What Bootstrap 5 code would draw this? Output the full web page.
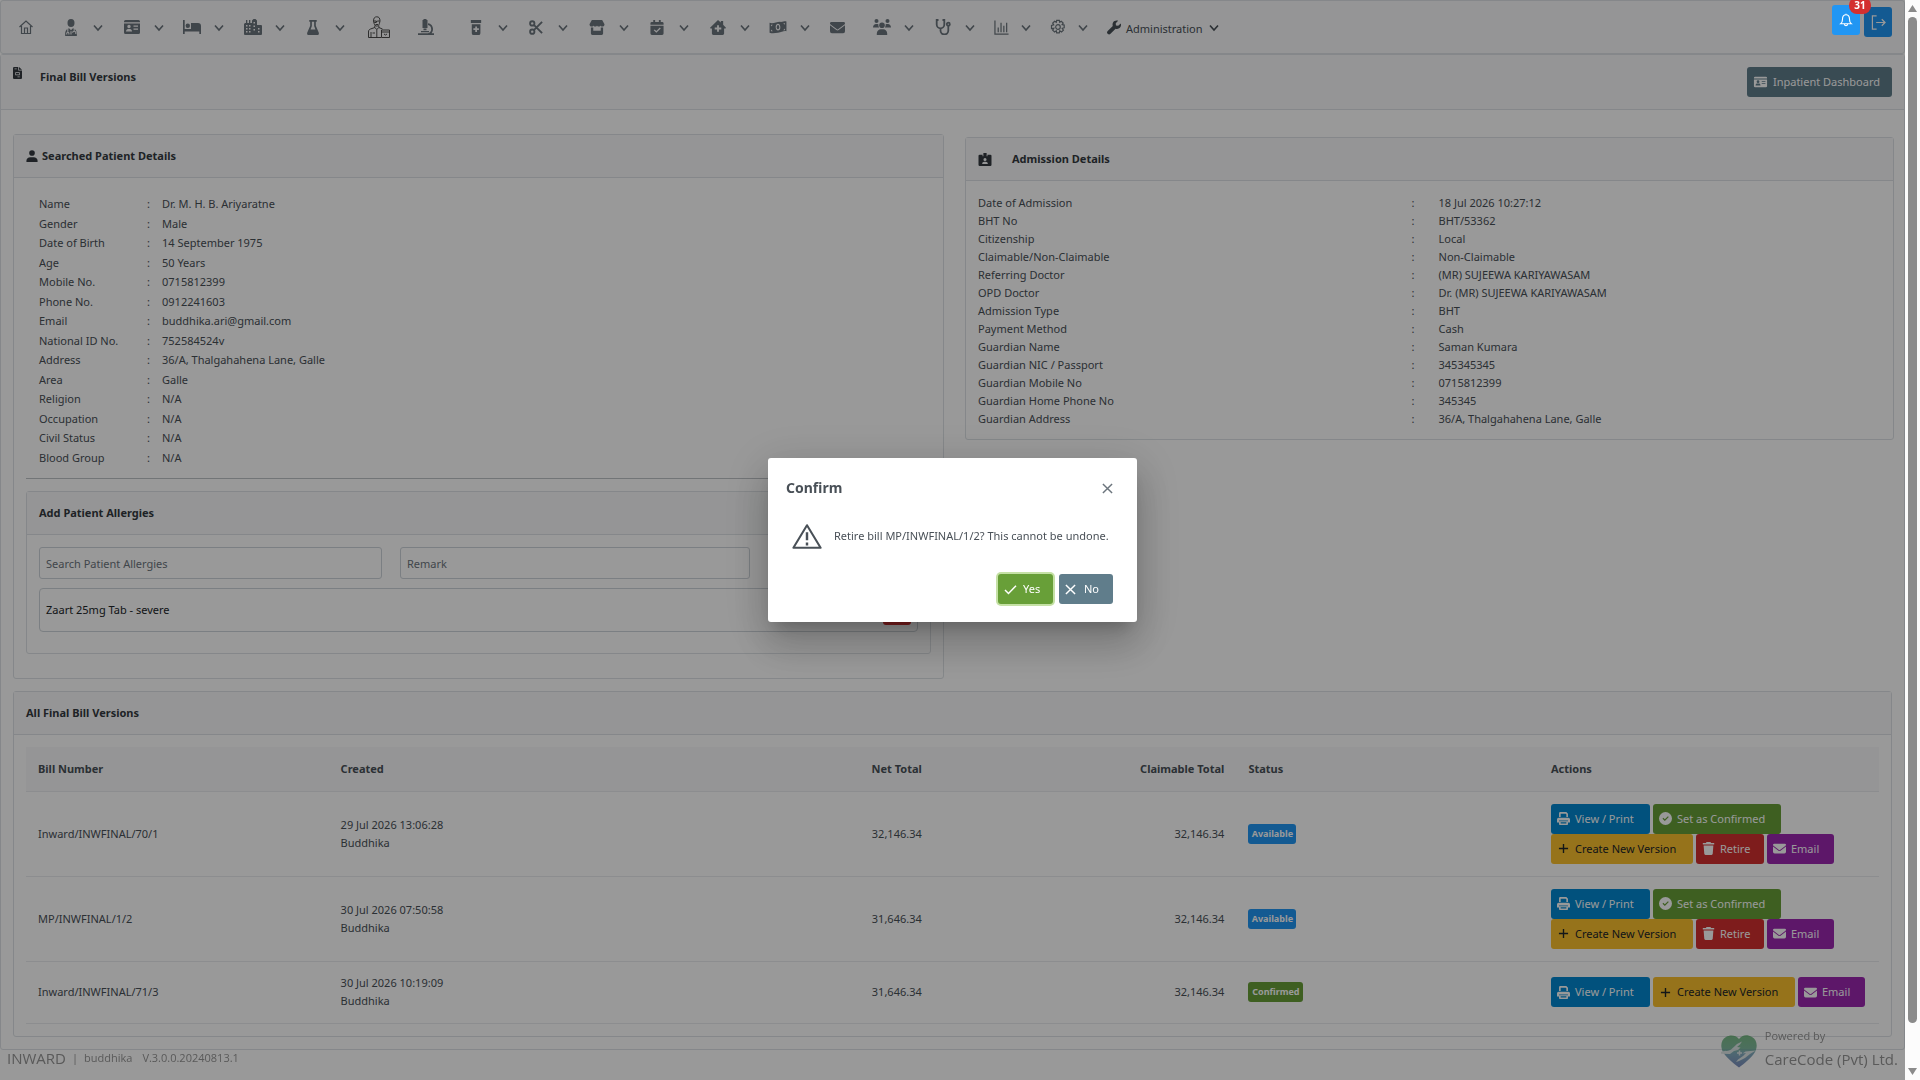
<!DOCTYPE html>
<html lang="en">
<head>
<meta charset="utf-8">
<meta name="viewport" content="width=device-width, initial-scale=1">
<title>Final Bill Versions</title>
<link href="https://cdn.jsdelivr.net/npm/bootstrap@5.3.0/dist/css/bootstrap.min.css" rel="stylesheet">
<style>
:root{--line:#dee2e6;--ink:#495057;--head:#f8f9fa}
body{font-family:"Noto Sans","Open Sans",sans-serif;font-size:11px;line-height:18px;color:var(--ink);background:#fff}
svg{display:block;flex:none}
.btn,.form-control{font-size:11px;line-height:18px;border-radius:3px}
.page{min-width:0;min-height:100vh;margin-right:15px;padding-bottom:31px}
.menubar{height:54px;border:1px solid var(--line);border-radius:3px;padding:0 12px 0 8px;color:#6c757d}
.menubar .item{display:flex;align-items:center;padding:0 9px;gap:12px;color:#6c757d;text-decoration:none;height:52px}
.menubar .item:nth-child(even){padding-right:10px}
.menubar .item.tight{gap:11px;padding-right:9px}
.menubar .leaf{padding-right:19px}
.menubar .item.leaf-s{padding-right:15px}
.menubar .item.leaf-l{padding-right:23px}
.menubar .item.admin{gap:5px;color:var(--ink)}
.pg-panel{border:1px solid var(--line);border-radius:3px}
.pg-head{height:55px;background:var(--head);border-bottom:1px solid var(--line);padding:12px 12px 0 12px;color:#343a40}
.pg-head h1{font-size:11px;font-weight:700;line-height:20px;margin:0 0 0 18px}
.btn-slate{background:#607d8b;color:#fff}
.btn-sq{width:28px;height:30px;padding:0}
.btn-blue{background:#2196f3;color:#fff}
.btn-red{background:#d32f2f;color:#fff}
.btn-p{height:30px;padding:0 12px 0 6px;display:inline-flex;align-items:center;gap:5px;border:0;white-space:nowrap}
.notify{position:relative;z-index:1060}
.btn-out{margin-top:2px}
.notify .count{position:absolute;top:-8px;left:17px;min-width:22px;height:17px;border-radius:8px;background:#d32f2f;color:#fff;font-weight:700;font-size:10px;line-height:17px;text-align:center}
.main-body{padding:0 12px 12px}
.panel{border:1px solid var(--line);border-radius:3px}
.panel>header{height:43px;background:var(--head);border-bottom:1px solid var(--line);padding:0 12px;display:flex;align-items:center;font-weight:700;color:#343a40}
.panel>header h2{font-size:11px;font-weight:700;line-height:18px;margin:0}
.two-up{gap:21px}
.left-col{flex:0 1 931px}
.left-body{padding:8px 12px}
.right-col{flex:1 1 0;padding-top:3px;margin-right:-2px}
.adm-body{padding:13px 12px 11px}
.facts th{font-weight:400}
.facts td,.facts th{padding:0}
.pt{margin:8px 13px 0}
.pt tr:nth-child(odd){height:20px}
.pt tr:nth-child(even){height:19px}
.pt th{width:108px}.pt .sep{width:15px}
.adm{width:100%}
.adm th{width:48%}.adm .sep{width:3%}
.rule{height:1px;background:#bfc3c7;margin:11px 0 12px}
.allergy-body{padding:12px 12px 20px}
.allergy-form{gap:18px;margin-bottom:9px}
.form-control{height:32px;padding:0 6px;border:1px solid #ced4da}
.form-control::placeholder{color:#6c757d}
.f1{flex:0 1 343px}.f2{flex:0 1 350px}
.allergy{border:1px solid #ced4da;border-radius:4px;height:44px;margin-bottom:1px;color:#212529;padding:0 6px}
.versions{margin-top:12px}
.versions-body{padding:12px}
.bills{width:100%;table-layout:fixed}
.bills th{background:var(--head);height:44px;font-weight:700}
.bills td,.bills th{padding:0 12px;border-bottom:1px solid #e9ecef}
.bills col.c{width:16.33%}
.bills td{height:85px}
.bills tr.short td{height:62px}
.acts{display:flex;flex-wrap:wrap;gap:0 3px;margin-right:-10px}
.b-view{background:#0288d1;color:#fff;min-width:99px}
.b-ok{background:#689f38;color:#fff;min-width:128px}
.b-new{background:#fbc02d;color:#212529;min-width:142px}
.b-del{background:#d32f2f;color:#fff;min-width:68px}
.b-mail{background:#9c27b0;color:#fff;min-width:67px}
.tagx{display:inline-block;height:20px;line-height:20px;border-radius:3px;font-size:9px;font-weight:700;color:#fff;padding:0 2px;vertical-align:middle;text-align:center}
.t-a{background:#2196f3;min-width:48px}.t-c{background:#689f38;min-width:55px}
.mask{position:fixed;inset:0 15px 0 0;background:rgba(0,0,0,.4);z-index:1050;display:flex;align-items:center;justify-content:center}
.dialog{width:369px;background:#fff;border-radius:3px;box-shadow:0 11px 15px -7px rgba(0,0,0,.2),0 24px 38px 3px rgba(0,0,0,.14),0 9px 46px 8px rgba(0,0,0,.12)}
.dialog .top{padding:18px 18px 0;height:58px}
.dialog .top h2{font-size:14px;font-weight:700;line-height:24px;margin:0}
.dialog .mid{padding:0 0 0 24px;gap:12px;height:40px;white-space:nowrap}
.dialog .bot{padding:18px 24px;gap:6px}
.b-yes{background:#689f38;color:#fff;width:55px;gap:6px;box-shadow:0 0 0 2px #c5e1a5}
.b-no{width:54px;gap:8px}
.xbtn{background:none;border:0;padding:0;width:24px;height:24px}
.foot{position:fixed;left:0;right:15px;bottom:0;height:54px;padding:0 7px;color:#969696;font-weight:500;font-family:"Open Sans","Noto Sans",sans-serif}
.foot .big{font-size:15px;line-height:26px}
.foot-user{height:26px;margin-top:19px;gap:6px}
.foot-logo{margin-top:9px;opacity:.75}
.foot-by{line-height:20px}
.sbar{position:fixed;top:0;right:0;bottom:0;width:15px;background:#fcfcfc;z-index:1070;padding:5px 0;align-items:center}
.sbar i{width:9px;flex:0 1 1006px;background:#8b8b8b;border-radius:5px;margin-top:5px}
</style>
<script src="https://cdn.jsdelivr.net/npm/bootstrap@5.3.0/dist/js/bootstrap.bundle.min.js"></script>
</head>
<body>
<svg width="0" height="0" class="position-absolute" aria-hidden="true">
<defs>
<symbol id="chev" viewBox="0 0 12 12"><path d="M2 4.500 6 9l4-4.500" fill="none" stroke="currentColor" stroke-width="1.600"/></symbol>
<symbol id="home" viewBox="0 0 16 16"><path d="M1.500 8 8 2l6.500 6M3.500 7v7.500h9V7M6.500 14.500V9h3v5.500" fill="none" stroke="currentColor" stroke-width="1.200"/></symbol>
<symbol id="doctor" viewBox="0 0 16 16"><ellipse cx="8" cy="3.800" rx="3.300" ry="3.700" fill="currentColor"/><path fill="currentColor" d="M2.500 16v-2c0-3 1.700-5 4-5L8 10.500 9.500 9c2.300 0 4 2 4 5v2z"/><path d="M5 9.500V12M11 9.500V11M4 14.500v-1a1 1 0 0 1 2 0v1M9.500 13a1.500 1.500 0 1 1 3 0v1M8 11.500v3" stroke="#f8f9fa" fill="none"/></symbol>
<symbol id="idcard" viewBox="0 0 16 16"><path fill="currentColor" fill-rule="evenodd" d="M1.500 1h13A1.500 1.500 0 0 1 16 2.500V3.300H0v-.8A1.500 1.500 0 0 1 1.500 1M0 4.500h16v9a1.500 1.500 0 0 1-1.500 1.500h-13A1.500 1.500 0 0 1 0 13.500zm5 1.300a1.700 1.700 0 1 0 0 3.400 1.700 1.700 0 0 0 0-3.400M2 12.500h6c0-1.600-1-2.500-2-2.500H4c-1 0-2 .9-2 2.500M9.500 6.500v1.300H14V6.500zm0 3v1.300H14V9.500z"/></symbol>
<symbol id="bed" viewBox="0 0 18 16"><path fill="currentColor" d="M0 1h1.700v9H8V4h7a3 3 0 0 1 3 3v8h-1.700v-2.500H1.700V15H0z"/><circle cx="4.800" cy="6.800" r="2.200" fill="currentColor"/></symbol>
<symbol id="city" viewBox="0 0 18 16"><path fill="currentColor" fill-rule="evenodd" d="M1 4h1V1h1.300v3H5V1h1.300v3H8V1.500L9.500 0h2L13 1.500V6h4a1 1 0 0 1 1 1v8a1 1 0 0 1-1 1H1a1 1 0 0 1-1-1V5zM2 6v1.500h1.500V6zm3 0v1.500h1.500V6zM2 9v1.500h1.500V9zm3 0v1.500h1.500V9zm-3 3v1.500h1.500V12zm3 0v1.500h1.500V12zm4.500-9v1.500H11V3zm0 3.500V8H11V6.500zm0 3.500v1.500H11V10zm4.500-1v1.500h1.500V9zm0 3v1.500h1.500V12z"/></symbol>
<symbol id="flask" viewBox="0 0 16 16"><path fill="currentColor" fill-rule="evenodd" d="M4 0h8v1.800h-1V6l3.100 7.200C14.700 14.600 14 16 12.700 16H3.300c-1.300 0-2-1.400-1.400-2.800L5 6V1.800H4zM6.800 1.800v4.600L5.400 10h5.200L9.200 6.400V1.800z"/></symbol>
<symbol id="lab" viewBox="0 0 22 22"><g fill="none" stroke="#3a3a3a" stroke-width=".9"><path d="M5.500 5C5.500 2 6.800.8 8.800.8S12 2 12 5l-.6 2.500c-.4 1.500-1.400 2.600-2.600 2.600S6.500 9 6.100 7.500zM6 5h2.300v1.500H6.300M9.300 5h2.400M8.300 5.500h1M7.500 8.500h2.500M6.800 9.500v2L2.500 13C1 13.500.5 14.500.5 16v5.500H13M10.800 9.500v2l3.700 1.500M6.800 11.500l2 2 2-2M8.800 13.500v8M3 16v5.500M4.500 17h2.500M13.500 14h8v7.500h-8zM13.500 16h8M16 18l1.500 1 1.500-1"/></g></symbol>
<symbol id="scope" viewBox="0 0 16 16"><path fill="currentColor" d="M4.500 1h1V0h3v1h1v8h-5zM5.500 9.500h3v1.800h-3zM1 14.200h9c2-.6 3.200-2 3.200-4 0-2.300-1.400-4-3.200-4.200V4.200c3 .2 5 2.800 5 5.900 0 1.600-.5 3-1.400 4.100H16V16H0v-1.800zM3 12h8v1.200H3z"/></symbol>
<symbol id="bottle" viewBox="0 0 16 16"><path fill="currentColor" fill-rule="evenodd" d="M2.500 0h11v3.200h-11zM3.500 4.400h9.200V14a2 2 0 0 1-2 2H5.500a2 2 0 0 1-2-2zm3.700 2.400v2h-2v1.900h2v2h1.900v-2h2V8.800h-2v-2z"/></symbol>
<symbol id="cut" viewBox="0 0 16 16"><g fill="none" stroke="currentColor" stroke-width="2"><circle cx="4" cy="3.600" r="2.300"/><circle cx="4" cy="12.400" r="2.300"/><path d="M5.700 5.200 14.500 14M5.700 10.800 14.500 2"/></g></symbol>
<symbol id="shop" viewBox="0 0 16 16"><path fill="currentColor" fill-rule="evenodd" d="M2.500 0h11L16 4.500C16 6 15 7 13.700 7s-1.900-.8-1.900-.8S11 7 9.900 7 8 6.200 8 6.200 7.200 7 6.100 7s-1.900-.8-1.900-.8S3.500 7 2.300 7 0 6 0 4.500zM1.500 8H4v3.500h8V8h2.500v6.500A1.500 1.500 0 0 1 13 16H3a1.500 1.500 0 0 1-1.500-1.500z"/></symbol>
<symbol id="cal" viewBox="0 0 16 16"><path fill="currentColor" fill-rule="evenodd" d="M4 0h2v2h4V0h2v2h1.500A1.500 1.500 0 0 1 15 3.500V5H1V3.500A1.500 1.500 0 0 1 2.500 2H4zM1 6h14v8.500a1.500 1.500 0 0 1-1.500 1.500h-11A1.500 1.500 0 0 1 1 14.500zm10 2-3.700 3.700L5.500 10l-1 1 2.800 2.700L12 9z"/></symbol>
<symbol id="hmed" viewBox="0 0 18 16"><path fill="currentColor" fill-rule="evenodd" d="M9 0l3 2.600V1h2.500v4L17.500 8.200l-.5.800H15.500V14.500A1.500 1.500 0 0 1 14 16H4a1.500 1.500 0 0 1-1.500-1.500V9H1l-.5-.8zM8 5.500V8H5.500v2H8v2.500h2V10h2.500V8H10V5.500z"/></symbol>
<symbol id="cash" viewBox="0 0 18 16"><path fill="currentColor" fill-rule="evenodd" d="M0 3c4 1.500 8-1.500 12-1 2.500 0 4-1 6-.5v10.500c-3-.8-5 1-9 1.500-3 .4-6 1-9 0zM9 4C7.500 4 6.500 5.500 6.500 7.500S7.500 11.300 9 11.300 11.500 10 11.500 7.800 10.500 4 9 4M1.500 5v2L3.500 5zm15 6V9l-2 2zM1.500 10v2h2zM14.500 3.500l2 1.500V3.500z"/><ellipse cx="9" cy="7.600" rx="1.300" ry="2.200" fill="currentColor"/></symbol>
<symbol id="mail" viewBox="0 0 16 16"><path fill="currentColor" d="M1.500 2h13A1.500 1.500 0 0 1 16 3.500c0 .5-.2.900-.6 1.200L8.600 9.800a1 1 0 0 1-1.200 0L.6 4.700A1.500 1.500 0 0 1 1.500 2M0 5.600l6.800 5.100c.7.500 1.700.5 2.400 0L16 5.600V12a2 2 0 0 1-2 2H2a2 2 0 0 1-2-2z"/></symbol>
<symbol id="users" viewBox="0 0 18 16"><g fill="currentColor"><circle cx="3.500" cy="2" r="2"/><circle cx="14.500" cy="2" r="2"/><circle cx="9" cy="6.200" r="2.800"/><path d="M0 8.500C0 6.500 1.500 5 3 5h1.500l.9.300C5.200 7 5.600 7.700 6.200 8.500zM18 8.500C18 6.500 16.500 5 15 5h-1.500l-.9.300c.2 1.700-.2 2.400-.8 3.200zM3.800 16v-1.500c0-2.500 2-4.300 4-4.300h2.500c2 0 3.900 1.800 3.900 4.300V16z"/></g></symbol>
<symbol id="steth" viewBox="0 0 16 16"><g fill="none" stroke="currentColor" stroke-width="1.800"><path d="M3.500 1H1.700v4.500a3.800 3.800 0 0 0 7.600 0V1H7.500M5.500 9.500v2a3.800 3.800 0 0 0 7.800 0V7"/><circle cx="13.300" cy="5.200" r="1.500"/></g></symbol>
<symbol id="chart" viewBox="0 0 16 16"><path d="M1 .5V15h14.500M4.500 13V8M7.500 13V3M10.500 13V6M13.500 13V3" fill="none" stroke="currentColor" stroke-width="1.300"/></symbol>
<symbol id="cog" viewBox="0 0 16 16"><g fill="none" stroke="currentColor" stroke-width="1.200"><path d="M6.700 1h2.600l.4 1.900 1.600-1 1.900 1.800-1.100 1.700 2.100.4v2.600l-2 .6 1.200 1.800-1.900 1.800-1.700-1.100-.5 2.100H6.700l-.4-2.100-1.700 1.100-1.900-1.800 1.100-1.800L1.500 9.300V6.200l2.200-.6-1-1.900L4.600 1.900l1.700 1z" transform="translate(0 .3)"/><circle cx="8" cy="8" r="2.300"/></g></symbol>
<symbol id="wrench" viewBox="0 0 16 16"><path fill="currentColor" d="M15.700 3.300 12.800 6 10.200 5.800 10 3.200 12.700.3C10.500-.4 8 .3 6.900 2.300c-.7 1.300-.7 2.700-.3 3.900L.8 12a2.200 2.200 0 0 0 3.200 3.200l5.800-5.800c2.200.7 4.600-.1 5.700-2.200.6-1.300.7-2.700.2-3.900"/></symbol>
<symbol id="bell" viewBox="0 0 16 16"><path d="M2 12.300h12c-1.500-1.200-2-2.300-2-5.300C12 4 10.500 2 8 2S4 4 4 7c0 3-.5 4.100-2 5.300zM6.300 12.800a1.700 1.700 0 0 0 3.400 0M8 .8V2" fill="none" stroke="currentColor" stroke-width="1.300"/></symbol>
<symbol id="logout" viewBox="0 0 16 16"><path d="M6 1H1.500v14H6M5.500 8h9.500M11.500 4.500 15 8l-3.500 3.500" fill="none" stroke="currentColor" stroke-width="1.300"/></symbol>
<symbol id="file" viewBox="0 0 12 16"><path fill="currentColor" fill-rule="evenodd" d="M1.500 0H7v4.500h5v10A1.500 1.500 0 0 1 10.500 16h-9A1.500 1.500 0 0 1 0 14.500v-13A1.500 1.500 0 0 1 1.500 0M8 0l4 3.700H8zM2 2v1h3V2zM3 7v4h6V7zm1 1h4v2H4zm2 4.500v1h3v-1z"/></symbol>
<symbol id="user" viewBox="0 0 14 14"><circle cx="7" cy="3.500" r="3.300" fill="currentColor"/><path fill="currentColor" d="M.5 14v-1.500C.5 10 2.500 8.500 5 8.500h4c2.500 0 4.500 1.500 4.500 4V14z"/></symbol>
<symbol id="clip" viewBox="0 0 16 16"><path fill="currentColor" fill-rule="evenodd" d="M6 0h4v4h1V2h3.500A1.500 1.500 0 0 1 16 3.500v11a1.500 1.500 0 0 1-1.500 1.500h-13A1.500 1.500 0 0 1 0 14.500v-11A1.500 1.500 0 0 1 1.500 2H5v2h1zm2 6a1.900 1.900 0 1 0 0 3.800A1.900 1.900 0 0 0 8 6m-3.500 7.500h7c0-1.700-1.200-2.700-2.500-2.700H7c-1.300 0-2.500 1-2.500 2.700"/></symbol>
<symbol id="print" viewBox="0 0 16 16"><path fill="currentColor" fill-rule="evenodd" d="M2.500 6V1.500A1.500 1.500 0 0 1 4 0h7.500l2 2v4h-2V2.800L10.700 2H4.500v4zM2 7h12a2 2 0 0 1 2 2v4h-2.500v-2.500h-11V13H0V9a2 2 0 0 1 2-2m.5 4.500h11V15a1 1 0 0 1-1 1h-9a1 1 0 0 1-1-1zm2 1.200V14h7v-1.300z"/></symbol>
<symbol id="okc" viewBox="0 0 16 16"><path fill="currentColor" fill-rule="evenodd" d="M8 0a8 8 0 1 1 0 16A8 8 0 0 1 8 0m3 5.200L7.200 9 5.300 7.200l-1 1L7.200 11 12 6.200z"/></symbol>
<symbol id="plus" viewBox="0 0 12 12"><path d="M6 1v10M1 6h10" stroke="currentColor" stroke-width="1.500"/></symbol>
<symbol id="trash" viewBox="0 0 14 16"><path fill="currentColor" d="M4.500 0h5l.6 1.200H14V3.200H0v-2h3.900zM1 4.200h12l-.8 10.400A1.500 1.500 0 0 1 10.700 16H3.300a1.500 1.500 0 0 1-1.500-1.400z"/></symbol>
<symbol id="warn" viewBox="0 0 32 28"><path d="M16 2 30.500 26h-29z" fill="none" stroke="currentColor" stroke-width="2.200" stroke-linejoin="round"/><path d="M16 9.500v8.500M16 20.500v3" stroke="currentColor" stroke-width="2.600"/></symbol>
<symbol id="check" viewBox="0 0 14 12"><path d="M1 6.500 4.800 10.300 13 1.800" fill="none" stroke="currentColor" stroke-width="1.600"/></symbol>
<symbol id="times" viewBox="0 0 12 12"><path d="M1 1l10 10M11 1 1 11" stroke="currentColor" stroke-width="1.600"/></symbol>
<linearGradient id="lg" x1="0" y1="0" x2="0" y2="1"><stop offset="0" stop-color="#4fa65e"/><stop offset=".4" stop-color="#55a37c"/><stop offset=".55" stop-color="#5a93a8"/><stop offset="1" stop-color="#4f66a8"/></linearGradient>
<symbol id="heart" viewBox="0 0 36 33"><path fill="url(#lg)" d="M18 4C15 0 9-.5 5 2 0 5-1 11 2 17c3 5 10 11 16 15.500C24 28 31 22 34 17c3-6 2-12-3-15S21 0 18 4"/><path d="M0 17c3-1.500 5-.5 8-1.500 3-1 5-4 8-6.500l5-2.500-2 3-3 2.500 3.500.5-2.500 2.500-4 1-4 3-9-.3zM35.500 15.500l-6 .5-5 .5-3 2 3.500-.5-3 3-5 3.500-2 2.500 3-1 6-3 5-4 5-3z" fill="#d3dfdf"/><path d="M18.500 15.500v5M16 18h5" stroke="#d3dfdf" stroke-width="1.500"/></symbol>
</defs>
</svg>

<div class="page">
  <nav class="menubar d-flex align-items-center bg-light" aria-label="Main menu">
    <a class="item leaf" href="#" aria-label="Home"><svg width="16" height="16"><use href="#home"/></svg></a>
    <a class="item" href="#" aria-label="Doctors"><svg width="18" height="17"><use href="#doctor"/></svg><svg width="12" height="12"><use href="#chev"/></svg></a>
    <a class="item" href="#" aria-label="Patients"><svg width="18" height="16"><use href="#idcard"/></svg><svg width="12" height="12"><use href="#chev"/></svg></a>
    <a class="item" href="#" aria-label="Inward"><svg width="18" height="16"><use href="#bed"/></svg><svg width="12" height="12"><use href="#chev"/></svg></a>
    <a class="item" href="#" aria-label="Hospital"><svg width="18" height="16"><use href="#city"/></svg><svg width="12" height="12"><use href="#chev"/></svg></a>
    <a class="item" href="#" aria-label="Laboratory"><svg width="18" height="15"><use href="#flask"/></svg><svg width="12" height="12"><use href="#chev"/></svg></a>
    <a class="item leaf-s" href="#" aria-label="Technician"><svg width="28" height="22"><use href="#lab"/></svg></a>
    <a class="item leaf-l" href="#" aria-label="Microscope"><svg width="18" height="16"><use href="#scope"/></svg></a>
    <a class="item" href="#" aria-label="Pharmacy"><svg width="18" height="15"><use href="#bottle"/></svg><svg width="12" height="12"><use href="#chev"/></svg></a>
    <a class="item" href="#" aria-label="Theatre"><svg width="18" height="15"><use href="#cut"/></svg><svg width="12" height="12"><use href="#chev"/></svg></a>
    <a class="item" href="#" aria-label="Store"><svg width="18" height="15"><use href="#shop"/></svg><svg width="12" height="12"><use href="#chev"/></svg></a>
    <a class="item" href="#" aria-label="Appointments"><svg width="18" height="15"><use href="#cal"/></svg><svg width="12" height="12"><use href="#chev"/></svg></a>
    <a class="item" href="#" aria-label="Clinic"><svg width="18" height="15"><use href="#hmed"/></svg><svg width="12" height="12"><use href="#chev"/></svg></a>
    <a class="item" href="#" aria-label="Payments"><svg width="18" height="15"><use href="#cash"/></svg><svg width="12" height="12"><use href="#chev"/></svg></a>
    <a class="item leaf" href="#" aria-label="Messages"><svg width="15" height="15"><use href="#mail"/></svg></a>
    <a class="item" href="#" aria-label="Staff"><svg width="18" height="16"><use href="#users"/></svg><svg width="12" height="12"><use href="#chev"/></svg></a>
    <a class="item" href="#" aria-label="Channelling"><svg width="18" height="16"><use href="#steth"/></svg><svg width="12" height="12"><use href="#chev"/></svg></a>
    <a class="item tight" href="#" aria-label="Reports"><svg width="15" height="15"><use href="#chart"/></svg><svg width="12" height="12"><use href="#chev"/></svg></a>
    <a class="item tight" href="#" aria-label="Settings"><svg width="16" height="16"><use href="#cog"/></svg><svg width="12" height="12"><use href="#chev"/></svg></a>
    <a class="item admin" href="#"><svg width="14" height="15"><use href="#wrench"/></svg><span class="pt-1">Administration</span><svg width="12" height="12"><use href="#chev"/></svg></a>
    <div class="d-flex ms-auto align-items-start align-self-start gap-1 pt-1">
      <button class="btn btn-blue btn-sq border-0 notify" aria-label="Notifications"><svg width="14" height="14" class="mx-auto"><use href="#bell"/></svg><span class="count">31</span></button>
      <button class="btn btn-blue btn-sq border-0 btn-out" aria-label="Log out"><svg width="15" height="15" class="mx-auto"><use href="#logout"/></svg></button>
    </div>
  </nav>

  <main class="pg-panel">
    <div class="pg-head d-flex align-items-start">
      <svg width="9" height="12"><use href="#file"/></svg>
      <h1>Final Bill Versions</h1>
      <button class="btn btn-slate btn-p ms-auto"><svg width="15" height="12" viewBox="0 0 16 14" preserveAspectRatio="none"><use href="#idcard" width="16" height="14"/></svg>Inpatient Dashboard</button>
    </div>

    <div class="main-body">
      <div class="d-flex pt-4 two-up">
        <section class="panel left-col">
          <header class="gap-1"><svg width="12" height="12"><use href="#user"/></svg><h2>Searched Patient Details</h2></header>
          <div class="left-body">
            <table class="facts pt">
              <tbody>
              <tr><th scope="row">Name</th><td class="sep">:</td><td>Dr. M. H. B. Ariyaratne</td></tr>
              <tr><th scope="row">Gender</th><td>:</td><td>Male</td></tr>
              <tr><th scope="row">Date of Birth</th><td>:</td><td>14 September 1975</td></tr>
              <tr><th scope="row">Age</th><td>:</td><td>50 Years</td></tr>
              <tr><th scope="row">Mobile No.</th><td>:</td><td>0715812399</td></tr>
              <tr><th scope="row">Phone No.</th><td>:</td><td>0912241603</td></tr>
              <tr><th scope="row">Email</th><td>:</td><td>buddhika.ari@gmail.com</td></tr>
              <tr><th scope="row">National ID No.</th><td>:</td><td>752584524v</td></tr>
              <tr><th scope="row">Address</th><td>:</td><td>36/A, Thalgahahena Lane, Galle</td></tr>
              <tr><th scope="row">Area</th><td>:</td><td>Galle</td></tr>
              <tr><th scope="row">Religion</th><td>:</td><td>N/A</td></tr>
              <tr><th scope="row">Occupation</th><td>:</td><td>N/A</td></tr>
              <tr><th scope="row">Civil Status</th><td>:</td><td>N/A</td></tr>
              <tr><th scope="row">Blood Group</th><td>:</td><td>N/A</td></tr>
              </tbody>
            </table>
            <div class="rule"></div>
            <section class="panel mb-3">
              <header><h2>Add Patient Allergies</h2></header>
              <div class="allergy-body">
                <div class="d-flex allergy-form">
                  <input class="form-control f1" type="text" placeholder="Search Patient Allergies" aria-label="Search Patient Allergies">
                  <input class="form-control f2" type="text" placeholder="Remark" aria-label="Remark">
                </div>
                <div class="allergy d-flex align-items-center justify-content-between"><span>Zaart 25mg Tab - severe</span><button class="btn btn-red btn-sq border-0" aria-label="Remove allergy"><svg width="12" height="14" class="mx-auto"><use href="#trash"/></svg></button></div>
              </div>
            </section>
          </div>
        </section>
        <div class="right-col">
          <section class="panel">
            <header><svg width="14" height="13"><use href="#clip"/></svg><h2 class="ms-3 ps-1">Admission Details</h2></header>
            <div class="adm-body">
              <table class="facts adm">
                <tbody>
                <tr><th scope="row">Date of Admission</th><td class="sep">:</td><td>18 Jul 2026 10:27:12</td></tr>
                <tr><th scope="row">BHT No</th><td>:</td><td>BHT/53362</td></tr>
                <tr><th scope="row">Citizenship</th><td>:</td><td>Local</td></tr>
                <tr><th scope="row">Claimable/Non-Claimable</th><td>:</td><td>Non-Claimable</td></tr>
                <tr><th scope="row">Referring Doctor</th><td>:</td><td>(MR) SUJEEWA KARIYAWASAM</td></tr>
                <tr><th scope="row">OPD Doctor</th><td>:</td><td>Dr. (MR) SUJEEWA KARIYAWASAM</td></tr>
                <tr><th scope="row">Admission Type</th><td>:</td><td>BHT</td></tr>
                <tr><th scope="row">Payment Method</th><td>:</td><td>Cash</td></tr>
                <tr><th scope="row">Guardian Name</th><td>:</td><td>Saman Kumara</td></tr>
                <tr><th scope="row">Guardian NIC / Passport</th><td>:</td><td>345345345</td></tr>
                <tr><th scope="row">Guardian Mobile No</th><td>:</td><td>0715812399</td></tr>
                <tr><th scope="row">Guardian Home Phone No</th><td>:</td><td>345345</td></tr>
                <tr><th scope="row">Guardian Address</th><td>:</td><td>36/A, Thalgahahena Lane, Galle</td></tr>
                </tbody>
              </table>
            </div>
          </section>
        </div>
      </div>

      <section class="panel versions">
        <header><h2>All Final Bill Versions</h2></header>
        <div class="versions-body">
          <table class="bills">
            <colgroup><col class="c"><col class="c"><col class="c"><col class="c"><col class="c"><col></colgroup>
            <thead><tr><th scope="col">Bill Number</th><th scope="col">Created</th><th scope="col" class="text-end">Net Total</th><th scope="col" class="text-end">Claimable Total</th><th scope="col">Status</th><th scope="col">Actions</th></tr></thead>
            <tbody>
            <tr><td>Inward/INWFINAL/70/1</td><td>29 Jul 2026 13:06:28<br>Buddhika</td><td class="text-end">32,146.34</td><td class="text-end">32,146.34</td><td><span class="tagx t-a">Available</span></td>
              <td><div class="acts"><button class="btn btn-p b-view"><svg width="13" height="13"><use href="#print"/></svg>View / Print</button><button class="btn btn-p b-ok"><svg width="13" height="13"><use href="#okc"/></svg>Set as Confirmed</button><button class="btn btn-p b-new"><svg width="13" height="11"><use href="#plus"/></svg>Create New Version</button><button class="btn btn-p b-del"><svg width="13" height="13"><use href="#trash"/></svg>Retire</button><button class="btn btn-p b-mail"><svg width="13" height="13"><use href="#mail"/></svg>Email</button></div></td></tr>
            <tr><td>MP/INWFINAL/1/2</td><td>30 Jul 2026 07:50:58<br>Buddhika</td><td class="text-end">31,646.34</td><td class="text-end">32,146.34</td><td><span class="tagx t-a">Available</span></td>
              <td><div class="acts"><button class="btn btn-p b-view"><svg width="13" height="13"><use href="#print"/></svg>View / Print</button><button class="btn btn-p b-ok"><svg width="13" height="13"><use href="#okc"/></svg>Set as Confirmed</button><button class="btn btn-p b-new"><svg width="13" height="11"><use href="#plus"/></svg>Create New Version</button><button class="btn btn-p b-del"><svg width="13" height="13"><use href="#trash"/></svg>Retire</button><button class="btn btn-p b-mail"><svg width="13" height="13"><use href="#mail"/></svg>Email</button></div></td></tr>
            <tr class="short"><td>Inward/INWFINAL/71/3</td><td>30 Jul 2026 10:19:09<br>Buddhika</td><td class="text-end">31,646.34</td><td class="text-end">32,146.34</td><td><span class="tagx t-c">Confirmed</span></td>
              <td><div class="acts"><button class="btn btn-p b-view"><svg width="13" height="13"><use href="#print"/></svg>View / Print</button><button class="btn btn-p b-new"><svg width="13" height="11"><use href="#plus"/></svg>Create New Version</button><button class="btn btn-p b-mail"><svg width="13" height="13"><use href="#mail"/></svg>Email</button></div></td></tr>
            </tbody>
          </table>
        </div>
      </section>
    </div>
  </main>
</div>

<footer class="foot d-flex align-items-start">
  <div class="d-flex align-items-center foot-user"><span class="big">INWARD</span><span>|</span><span>buddhika</span><span class="ms-1">V.3.0.0.20240813.1</span></div>
  <div class="d-flex ms-auto gap-2"><svg width="36" height="33" class="foot-logo"><use href="#heart"/></svg><div class="foot-by">Powered by<div class="big">CareCode (Pvt) Ltd.</div></div></div>
</footer>

<div class="mask">
  <div class="dialog" role="alertdialog" aria-labelledby="dlg-title" aria-describedby="dlg-text">
    <div class="top d-flex justify-content-between"><h2 id="dlg-title">Confirm</h2><button class="xbtn" aria-label="Close"><svg width="11" height="11" class="mx-auto text-secondary"><use href="#times"/></svg></button></div>
    <div class="mid d-flex align-items-center"><svg width="30" height="27"><use href="#warn"/></svg><span id="dlg-text">Retire bill MP/INWFINAL/1/2? This cannot be undone.</span></div>
    <div class="bot d-flex justify-content-end"><button class="btn btn-p b-yes"><svg width="13" height="11"><use href="#check"/></svg>Yes</button><button class="btn btn-p btn-slate b-no"><svg width="11" height="11"><use href="#times"/></svg>No</button></div>
  </div>
</div>

<div class="sbar d-flex flex-column" aria-hidden="true"><svg width="9" height="7" viewBox="0 0 9 7"><path d="M4.500 0 9 7H0z" fill="#8b8b8b"/></svg><i></i><svg class="mt-auto" width="9" height="7" viewBox="0 0 9 7"><path d="M0 0h9L4.500 7z" fill="#8b8b8b"/></svg></div>
</body>
</html>
